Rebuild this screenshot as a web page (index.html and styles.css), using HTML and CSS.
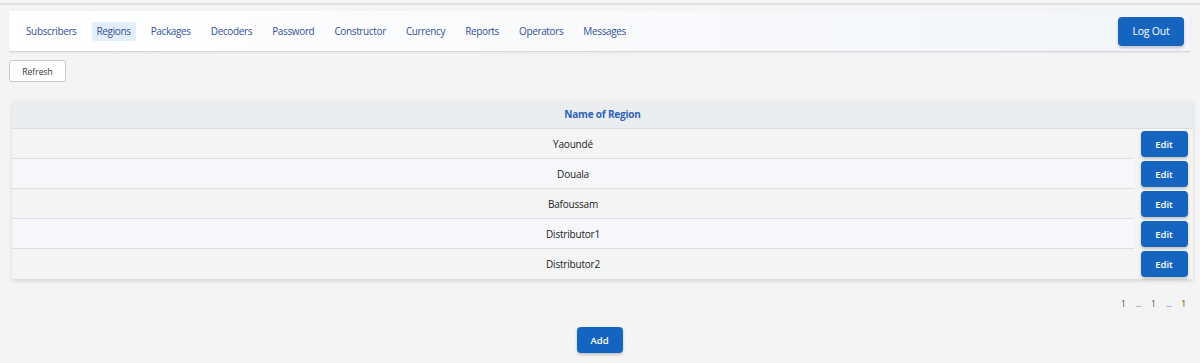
FILE: index.html
```html
<!DOCTYPE html>
<html>
<head>
<meta charset="utf-8">
<link rel="stylesheet" href="styles.css">
</head>
<body>
<div class="topline"></div>
<div class="app">
  <nav class="nav">
    <ul class="menu">
      <li class="item">Subscribers</li>
      <li class="item active">Regions</li>
      <li class="item">Packages</li>
      <li class="item">Decoders</li>
      <li class="item">Password</li>
      <li class="item">Constructor</li>
      <li class="item">Currency</li>
      <li class="item">Reports</li>
      <li class="item">Operators</li>
      <li class="item">Messages</li>
    </ul>
    <button class="btn primary logout">Log Out</button>
  </nav>
  <div class="toolbar">
    <button class="refresh">Refresh</button>
  </div>
  <div class="table">
    <div class="thead">
      <div class="th">Name of Region</div>
    </div>
    <div class="row odd"><div class="name">Yaoundé</div><div class="act"><button class="btn primary edit">Edit</button></div></div>
    <div class="row even"><div class="name">Douala</div><div class="act"><button class="btn primary edit">Edit</button></div></div>
    <div class="row odd"><div class="name">Bafoussam</div><div class="act"><button class="btn primary edit">Edit</button></div></div>
    <div class="row even"><div class="name">Distributor1</div><div class="act"><button class="btn primary edit">Edit</button></div></div>
    <div class="row odd last"><div class="name">Distributor2</div><div class="act"><button class="btn primary edit">Edit</button></div></div>
  </div>
  <div class="pager">
    <span class="pg">1</span><span class="dots">...</span><span class="pg">1</span><span class="dots">...</span><span class="pg">1</span>
  </div>
  <div class="addwrap">
    <button class="btn primary add">Add</button>
  </div>
</div>
</body>
</html>
```
FILE: styles.css
```css
* { box-sizing: border-box; }
html, body { margin: 0; padding: 0; }
body {
  background: #f4f4f4;
  font-family: "Open Sans", "Noto Sans", sans-serif;
  color: #222;
  padding-top: 3px;
  height: 363px;
  overflow: hidden;
}
.topline { height: 2px; background: #e0e0e0; }
.app { padding: 6px 10px 0 9px; }
.nav {
  height: 41px;
  display: flex;
  align-items: center;
  justify-content: space-between;
  padding: 0 6px 0 12px;
  background: linear-gradient(to right, #ffffff, #f2f5f9);
  border-bottom: 1px solid #d3d6da;
  box-shadow: 0 1px 2px rgba(0,0,0,0.06);
}
.menu {
  list-style: none;
  margin: 0;
  padding: 0;
  display: flex;
  gap: 10px;
  align-items: center;
}
.item {
  font-size: 10px;
  color: #33509a;
  padding: 0 5px;
  height: 19px;
  line-height: 19px;
  border-radius: 3px;
  letter-spacing: -0.36px;
}
.item.active { background: #e2eefb; }
.btn {
  border: none;
  font-family: "Open Sans", "Noto Sans", sans-serif;
  cursor: pointer;
}
.primary {
  background: #1565c0;
  color: #fff;
  border-radius: 4px;
  box-shadow: 0 2px 3px rgba(0,0,0,0.2);
}
.logout {
  width: 66px;
  height: 29px;
  font-size: 10.5px;
  letter-spacing: -0.2px;
}
.toolbar { margin-top: 8px; display: flex; }
.refresh {
  width: 57px;
  height: 22px;
  background: #fff;
  border: 1px solid #c9c9c9;
  border-radius: 3px;
  font-family: "Open Sans", "Noto Sans", sans-serif;
  font-size: 8.5px;
  color: #333;
  padding: 0;
}
.table {
  margin: 18px 0 0 3px;
  width: 1181px;
  border-radius: 4px 4px 0 0;
  box-shadow: 0 2px 4px rgba(0,0,0,0.12);
  background: #f4f4f4;
}
.thead {
  height: 29px;
  background: #e9edf0;
  border-bottom: 1px solid #dcdfe2;
  border-radius: 4px 4px 0 0;
  display: flex;
  align-items: center;
  justify-content: center;
}
.th {
  font-size: 10px;
  font-weight: 700;
  color: #2f62bd;
  letter-spacing: -0.2px;
}
.row {
  height: 30px;
  display: flex;
}
.name {
  flex: 1;
  display: flex;
  align-items: center;
  justify-content: center;
  font-size: 10px;
  color: #222;
  border-bottom: 1px solid #dedede;
  letter-spacing: -0.2px;
}
.row.even .name { background: #f6f7fb; }
.row.odd .name { background: #f4f4f4; }
.row.last .name { border-bottom: none; }
.act {
  width: 59px;
  display: flex;
  align-items: center;
  justify-content: center;
  padding-left: 1px;
}
.edit {
  width: 47px;
  height: 26px;
  font-size: 9.5px;
  font-weight: 600;
  padding: 0;
}
.pager {
  display: flex;
  justify-content: flex-end;
  align-items: center;
  gap: 10px;
  margin-top: 18px;
  padding-right: 4px;
  font-size: 8.5px;
  color: #5a4a2a;
  height: 12px;
}
.dots { color: #6a6a9a; letter-spacing: -0.5px; }
.addwrap {
  display: flex;
  justify-content: center;
  margin-top: 18px;
}
.add {
  width: 46px;
  height: 26px;
  font-size: 9.5px;
  font-weight: 600;
  padding: 0;
}
```
